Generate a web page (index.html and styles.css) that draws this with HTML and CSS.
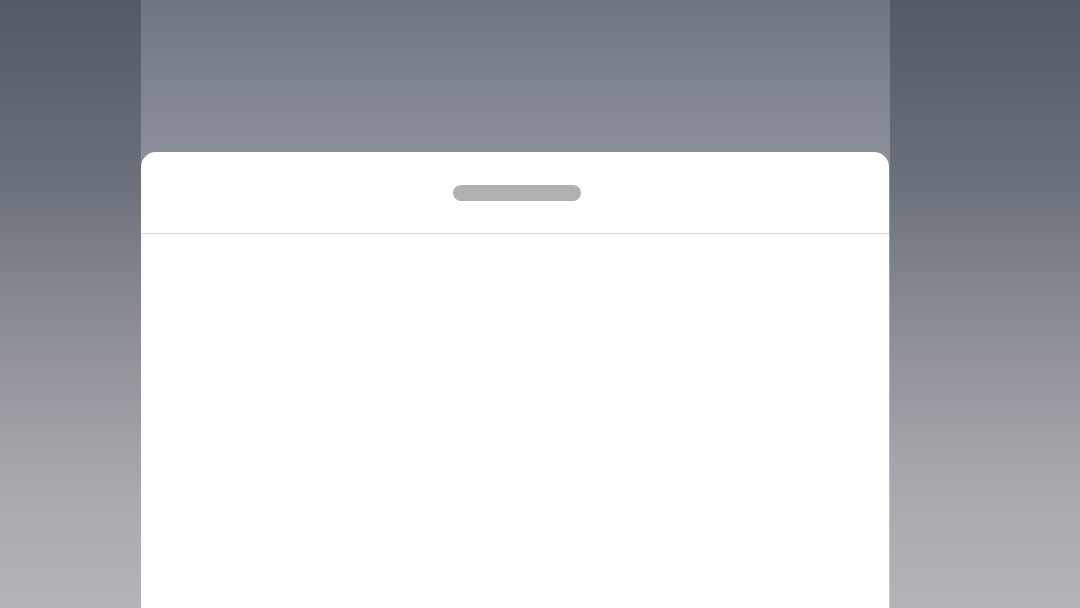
FILE: index.html
```html
<!DOCTYPE html>
<html>
<head>
<meta charset="utf-8">
<link rel="stylesheet" href="styles.css">
</head>
<body>
<div class="screen">
  <div class="side side-left"></div>
  <div class="center">
    <div class="sheet">
      <div class="sheet-header"><div class="handle"></div></div>
      <div class="sheet-body"></div>
    </div>
  </div>
  <div class="side side-right"></div>
</div>
</body>
</html>
```

FILE: styles.css
```css
html, body {
  margin: 0;
  padding: 0;
  width: 1080px;
  height: 608px;
  overflow: hidden;
  font-family: "Liberation Sans", Arial, sans-serif;
}
.screen {
  display: flex;
  width: 1080px;
  height: 608px;
}
.side {
  background: linear-gradient(to bottom, #535a65 0%, #6b717b 30%, #8d8f97 55%, #a9a8ae 80%, #b5b3b8 100%);
}
.side-left { width: 141px; }
.side-right { width: 190px; }
.center {
  width: 749px;
  display: flex;
  flex-direction: column;
  padding-top: 152px;
  box-sizing: border-box;
  background: linear-gradient(to bottom, #6e7684 0%, #8b8f9a 25%, #b0b0b6 60%, #c8c7cc 100%);
}
.sheet {
  flex: 1;
  width: 748px;
  background: #ffffff;
  border-radius: 15px 15px 0 0;
  display: flex;
  flex-direction: column;
}
.sheet-header {
  height: 81px;
  padding-left: 4px;
  border-bottom: 1px solid #d4d4d7;
  display: flex;
  align-items: center;
  justify-content: center;
}
.handle {
  width: 128px;
  height: 16px;
  border-radius: 8px;
  background: #b1b1b5;
}
.sheet-body { flex: 1; }
```
